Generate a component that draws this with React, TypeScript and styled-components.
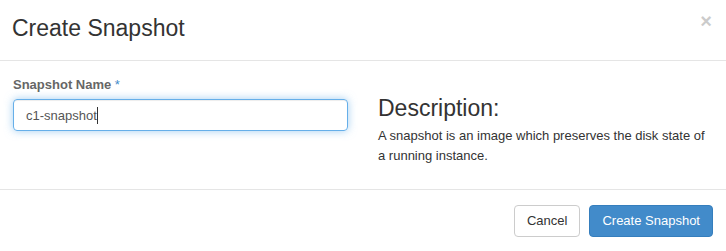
import styled, { createGlobalStyle } from "styled-components";

const GlobalStyle = createGlobalStyle`
  html, body {
    margin: 0;
    padding: 0;
    background: #fff;
  }
  body {
    font-family: "Liberation Sans", Arial, sans-serif;
    font-size: 13px;
    color: #333;
  }
`;

const Modal = styled.div`
  width: 726px;
  height: 251px;
  display: flex;
  flex-direction: column;
  background: #fff;
`;

const Header = styled.div`
  display: flex;
  justify-content: space-between;
  align-items: flex-start;
  height: 61px;
  box-sizing: border-box;
  padding: 15px 14px 0 12px;
  border-bottom: 1px solid #e5e5e5;
`;

const Title = styled.h3`
  margin: 0;
  font-size: 23px;
  font-weight: 400;
  line-height: 27px;
  color: #333;
`;

const Close = styled.button`
  margin: -4px 0 0 0;
  padding: 0;
  border: 0;
  background: transparent;
  font-family: "Liberation Sans", Arial, sans-serif;
  font-size: 20px;
  font-weight: 700;
  line-height: 1;
  color: #000;
  opacity: 0.2;
  cursor: pointer;
`;

const Body = styled.div`
  display: grid;
  grid-template-columns: 335px 335px;
  column-gap: 30px;
  padding: 15px 13px 13px;
  border-bottom: 1px solid #e5e5e5;
`;

const Field = styled.div`
  display: flex;
  flex-direction: column;
`;

const Label = styled.label`
  font-size: 13px;
  font-weight: 700;
  line-height: 18px;
  color: #666;
  margin-bottom: 5px;
`;

const Required = styled.span`
  color: #428bca;
  font-weight: 400;
`;

const Input = styled.div`
  display: flex;
  align-items: center;
  height: 32px;
  box-sizing: border-box;
  padding: 0 12px;
  border: 1px solid #66afe9;
  border-radius: 4px;
  box-shadow: inset 0 1px 1px rgba(0, 0, 0, 0.075),
    0 0 8px rgba(102, 175, 233, 0.6);
  font-size: 13px;
  color: #555;
`;

const Caret = styled.span`
  display: inline-block;
  width: 1px;
  height: 17px;
  background: #333;
`;

const Help = styled.div`
  display: flex;
  flex-direction: column;
  padding-right: 4px;
`;

const HelpTitle = styled.h3`
  margin: 19px 0 5px;
  font-size: 23px;
  font-weight: 400;
  line-height: 26px;
  color: #333;
`;

const HelpText = styled.p`
  margin: 0 0 10px;
  font-size: 13px;
  line-height: 20px;
  color: #333;
`;

const Footer = styled.div`
  display: flex;
  justify-content: flex-end;
  gap: 9px;
  padding: 15px 13px 0;
`;

const Button = styled.button<{ $primary?: boolean }>`
  height: 32px;
  padding: 0 12px;
  border-radius: 4px;
  border: 1px solid ${(p) => (p.$primary ? "#357ebd" : "#ccc")};
  background: ${(p) => (p.$primary ? "#428bca" : "#fff")};
  color: ${(p) => (p.$primary ? "#fff" : "#333")};
  font-family: "Liberation Sans", Arial, sans-serif;
  font-size: 13px;
  line-height: 18px;
  cursor: pointer;
`;

export default function App() {
  return (
    <>
      <GlobalStyle />
      <Modal>
        <Header>
          <Title>Create Snapshot</Title>
          <Close aria-label="Close">×</Close>
        </Header>
        <Body>
          <Field>
            <Label>
              Snapshot Name <Required>*</Required>
            </Label>
            <Input>
              c1-snapshot
              <Caret />
            </Input>
          </Field>
          <Help>
            <HelpTitle>Description:</HelpTitle>
            <HelpText>
              A snapshot is an image which preserves the disk state of a
              running instance.
            </HelpText>
          </Help>
        </Body>
        <Footer>
          <Button>Cancel</Button>
          <Button $primary>Create Snapshot</Button>
        </Footer>
      </Modal>
    </>
  );
}
